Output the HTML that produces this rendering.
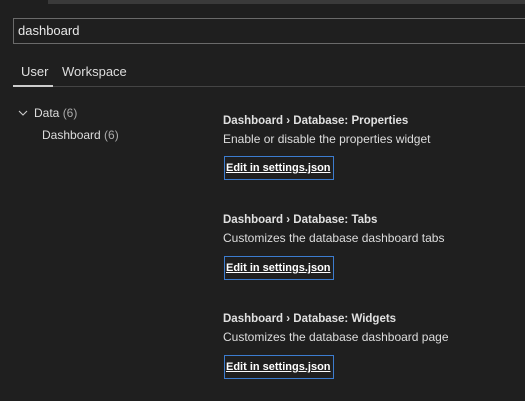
<html><head><style>
body{margin:0;width:525px;height:401px;background:#1f1f1f;overflow:hidden;font-family:"Liberation Sans",sans-serif;color:#ccc;position:relative}
.a{position:absolute;white-space:nowrap}
.btn{position:absolute;left:224px;width:110px;height:24px;border:1px solid #3c7ccf;box-sizing:border-box;color:#fff;font-weight:bold;font-size:11px;text-decoration:underline;line-height:22px;padding-left:1px;white-space:nowrap;overflow:hidden}
.t{font-weight:bold;font-size:11.5px;color:#e0e0e0}
.d{font-size:12px;color:#ddd}
</style></head><body>
<div class="a" style="left:48px;top:0;width:477px;height:4px;background:#3a3a3a"></div>
<div class="a" style="left:13px;top:18px;width:520px;height:26px;border:1px solid #6a6a6a;box-sizing:border-box;background:#1f1f1f"></div>
<div class="a" style="left:18px;top:23px;font-size:13px;color:#e8e8e8">dashboard</div>
<div class="a" style="left:21px;top:64px;font-size:13px;color:#e0e0e0">User</div>
<div class="a" style="left:62px;top:64px;font-size:13px;color:#ddd">Workspace</div>
<div class="a" style="left:13px;top:86px;width:512px;height:1px;background:#444"></div>
<div class="a" style="left:13px;top:85px;width:40px;height:2px;background:#ccc"></div>
<svg class="a" style="left:18px;top:109px" width="10" height="8"><path d="M1 2l4 4 4-4" stroke="#ccc" fill="none" stroke-width="1.1"/></svg>
<div class="a" style="left:34px;top:106px;font-size:12px;color:#ddd">Data <span style="color:#aaa">(6)</span></div>
<div class="a" style="left:42px;top:128px;font-size:12px;color:#ddd">Dashboard <span style="color:#aaa">(6)</span></div>
<div class="a t" style="left:223px;top:115px">Dashboard › Database: Properties</div>
<div class="a d" style="left:223px;top:132px">Enable or disable the properties widget</div>
<div class="btn" style="top:156px">Edit in settings.json</div>
<div class="a t" style="left:223px;top:214px">Dashboard › Database: Tabs</div>
<div class="a d" style="left:223px;top:231px">Customizes the database dashboard tabs</div>
<div class="btn" style="top:256px">Edit in settings.json</div>
<div class="a t" style="left:223px;top:313px">Dashboard › Database: Widgets</div>
<div class="a d" style="left:223px;top:330px">Customizes the database dashboard page</div>
<div class="btn" style="top:355px">Edit in settings.json</div>
</body></html>
